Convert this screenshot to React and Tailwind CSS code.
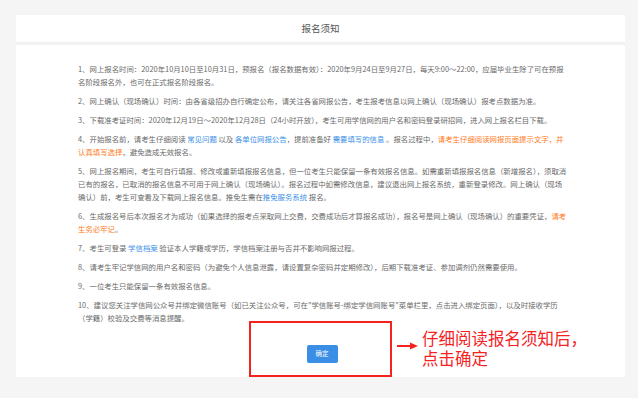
import React from "react";

const B = ({ children }) => <span className="text-[#3b8fe6]">{children}</span>;
const O = ({ children }) => <span className="text-[#ff7a1a]">{children}</span>;

export default function App() {
  const items = [
    <>1、网上报名时间：2020年10月10日至10月31日，预报名（报名数据有效）：2020年9月24日至9月27日，每天9:00～22:00，应届毕业生除了可在预报名阶段报名外，也可在正式报名阶段报名。</>,
    <>2、网上确认（现场确认）时间：由各省级招办自行确定公布，请关注各省网报公告，考生报考信息以网上确认（现场确认）报考点数据为准。</>,
    <>3、下载准考证时间：2020年12月19日～2020年12月28日（24小时开放），考生可用学信网的用户名和密码登录研招网，进入网上报名栏目下载。</>,
    <>4、开始报名前，请考生仔细阅读 <B>常见问题</B> 以及 <B>各单位网报公告</B>，提前准备好 <B>需要填写的信息</B> 。报名过程中，<O>请考生仔细阅读网报页面提示文字，并认真填写选择</O>，避免造成无效报名。</>,
    <>5、网上报名期间，考生可自行填报、修改或重新填报报名信息，但一位考生只能保留一条有效报名信息。如需重新填报报名信息（新增报名），须取消已有的报名，已取消的报名信息不可用于网上确认（现场确认）。报名过程中如需修改信息，建议退出网上报名系统，重新登录修改。网上确认（现场确认）前，考生可查看及下载网上报名信息。推免生需在<B>推免服务系统</B> 报名。</>,
    <>6、生成报名号后本次报名才为成功（如果选择的报考点采取网上交费，交费成功后才算报名成功），报名号是网上确认（现场确认）的重要凭证，<O>请考生务必牢记</O>。</>,
    <>7、考生可登录 <B>学信档案</B> 验证本人学籍或学历，学信档案注册与否并不影响网报过程。</>,
    <>8、请考生牢记学信网的用户名和密码（为避免个人信息泄露，请设置复杂密码并定期修改），后期下载准考证、参加调剂仍然需要使用。</>,
    <>9、一位考生只能保留一条有效报名信息。</>,
    <>10、建议您关注学信网公众号并绑定微信账号（如已关注公众号，可在"学信账号-绑定学信网账号"菜单栏里，点击进入绑定页面），以及时接收学历（学籍）校验及交费等消息提醒。</>,
  ];
  return (
    <div
      className="w-[638px] h-[398px] bg-[#f5f5f5] pt-[15px] pl-[16px] overflow-hidden"
      style={{ fontFamily: '"Noto Sans CJK SC", "Noto Sans", sans-serif' }}
    >
      <div className="relative w-[609px] h-[362px] bg-white flex flex-col">
        <div className="h-[30px] border-b-[3px] border-[#f2f2f2] flex items-center justify-center text-[9.5px] text-[#555]">
          报名须知
        </div>
        <div className="pl-[62px] pr-[56px] pt-[17px] flex flex-col gap-[6px] text-[7.4px] leading-[13px] text-[#6a6a6a]">
          {items.map((it, i) => (
            <p key={i}>{it}</p>
          ))}
        </div>
        <div className="flex justify-center mt-[21px] pl-[3px]">
          <button className="w-[31px] h-[18px] rounded-[2px] bg-[#3a8ee6] text-white text-[6.5px] flex items-center justify-center">
            确定
          </button>
        </div>

        <div className="absolute left-[233px] top-[306px] w-[143px] h-[56px] border-2 border-[#f5221f]" />
        <svg className="absolute left-[381px] top-[327px]" width="21" height="8" viewBox="0 0 21 8">
          <line x1="0" y1="4" x2="14" y2="4" stroke="#f5221f" strokeWidth="2" />
          <polygon points="13,0.5 21,4 13,7.5" fill="#f5221f" />
        </svg>
        <div className="absolute left-[406px] top-[313px] text-[16.5px] leading-[20px] text-[#f5221f]">
          仔细阅读报名须知后，
          <br />
          点击确定
        </div>
      </div>
    </div>
  );
}
